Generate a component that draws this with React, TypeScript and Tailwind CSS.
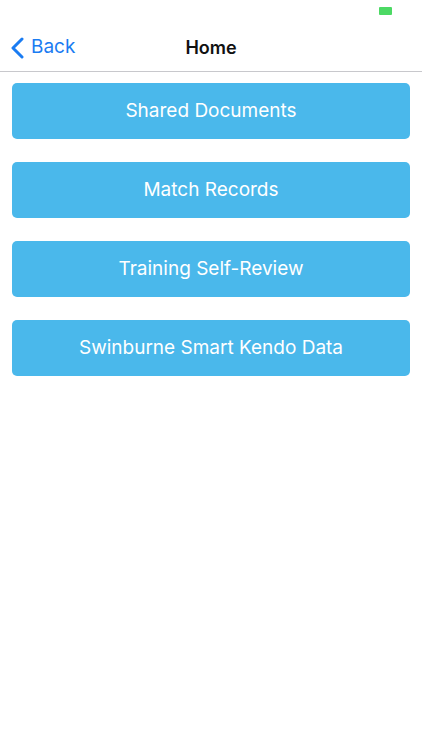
import React from 'react';

const items = ['Shared Documents', 'Match Records', 'Training Self-Review', 'Swinburne Smart Kendo Data'];

export default function App() {
    return (
        <div className="w-[422px] h-[750px] bg-white flex flex-col" style={{ fontFamily: 'Inter, "Liberation Sans", sans-serif' }}>
            <div className="h-[24px] flex justify-end items-start pr-[30px] pt-[7px]">
                <div className="w-[13px] h-[8px] bg-[#4cd964] rounded-[1px]" />
            </div>
            <div className="relative h-[48px] flex items-center border-b border-[#c8c8cc]">
                <button className="flex items-center gap-[7px] pl-[11px] text-[#1a7cf2] text-[19px]">
                    <svg width="13" height="22" viewBox="0 0 13 22" fill="none">
                        <path d="M11 2 L2 11 L11 20" stroke="#1a7cf2" strokeWidth="3" strokeLinecap="round" strokeLinejoin="round" />
                    </svg>
                    <span>Back</span>
                </button>
                <div className="absolute inset-0 flex items-center justify-center pointer-events-none">
                    <span className="text-[18px] font-semibold text-[#111]">Home</span>
                </div>
            </div>
            <div className="flex flex-col gap-[23px] px-[12px] pt-[11px]">
                {items.map((item) => (
                    <button
                        key={item}
                        className="h-[56px] w-full rounded-[5px] bg-[#4ab8eb] text-white text-[19px] flex items-center justify-center"
                    >
                        {item}
                    </button>
                ))}
            </div>
        </div>
    );
}
